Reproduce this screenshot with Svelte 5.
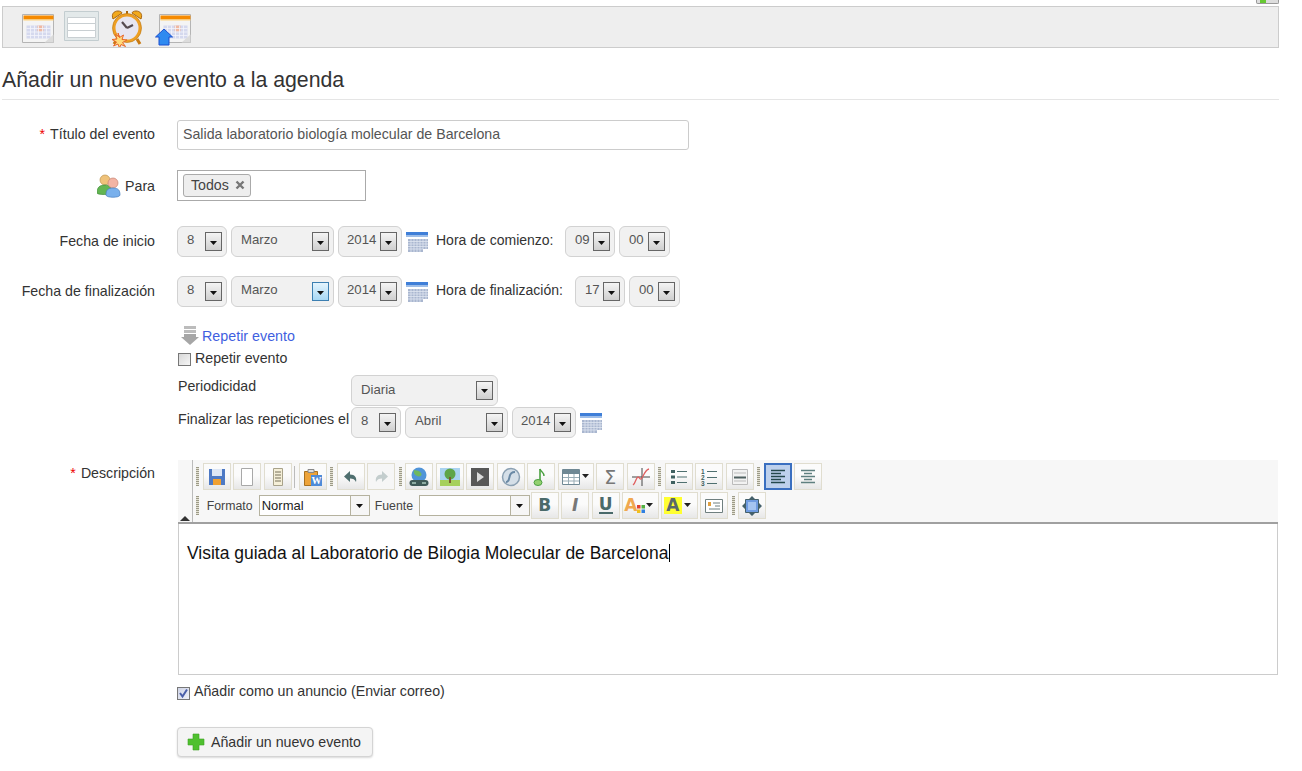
<script lang="ts">
</script>

{#snippet arrow(hot = false)}
  <span class="arrow" class:hot><svg width="7" height="4" viewBox="0 0 7 4"><path d="M0 0h7L3.500 4z" fill="#111" /></svg></span>
{/snippet}

{#snippet sel(text, size, hot = false)}
  <span class="sel {size}"><span class="sel-text">{text}</span>{@render arrow(hot)}</span>
{/snippet}

{#snippet calendar()}
  <svg class="cal" width="22" height="20" viewBox="0 0 22 20">
    <path d="M0 0h22v3H0z" fill="#3f7fd8" />
    <path d="M0 3h22v2H0z" fill="#9dbde8" />
    <path d="M2 7h20v10H17v3H2z" fill="#a9b6cf" />
    <path d="M2 9.500h20M2 12h20M2 14.500h20M2 17h15M5 7v13M8 7v13M11 7v13M14 7v13M17 7v10M20 7v10" stroke="#dfe6f1" stroke-width=".8" />
  </svg>
{/snippet}

{#snippet bigCal()}
  <path d="M0 0h31v28H0z" fill="#f4f4f4" stroke="#b4b4b4" />
  <path d="M1 1h30v4H1z" fill="#f58a00" />
  <path d="M1 5h30v1H1z" fill="#ffd27a" />
  <path d="M4 11h24v13H4z" fill="#d5d9ee" />
  <path d="M15 11h6v6h-6z" fill="#f0b9a2" />
  <path d="M4 14h24M4 17.500h24M4 21h24M8 11v13M12 11v13M16 11v13M20 11v13M24 11v13" stroke="#f4f5fb" stroke-width=".8" />
  <path d="M22 28l9-8v8z" fill="#dcdcdc" />
{/snippet}

<div class="page">
  <div class="corner"><span class="corner-icon"><i></i></span></div>

  <nav class="iconbar">
    <svg width="44" height="40" viewBox="0 0 44 40"><g transform="translate(2.500 7.500)">{@render bigCal()}</g></svg>
    <svg width="44" height="40" viewBox="0 0 44 40">
      <path d="M.5 4.500h34v29H.5z" fill="#e3e9ea" stroke="#c3cdd0" />
      <path d="M3.500 10.500h28v6h-28zM3.500 16.500h28v7h-28zM3.500 23.500h28v7h-28z" fill="#fff" stroke="#c9cfd2" />
    </svg>
    <svg width="44" height="40" viewBox="0 0 44 40">
      <path d="M5 12c-2-5 1-8 5-8 2 0 4 1 4 2zM33 12c2-5-1-8-5-8-2 0-4 1-4 2z" fill="#f2a91c" stroke="#a8650f" />
      <path d="M19 4v4" stroke="#a8650f" stroke-width="2" />
      <path d="M9 32l-3 5M29 32l3 5" stroke="#c97a12" stroke-width="3" />
      <circle cx="19" cy="21" r="13" fill="#e7e5f0" stroke="#ee9f24" stroke-width="3" />
      <circle cx="19" cy="21" r="14.500" fill="none" stroke="#b9730f" stroke-width=".6" />
      <path d="M19 21l-5-6M19 21l6-3" stroke="#554a50" stroke-width="2.200" />
      <path d="M10 26l1.500 4.500 4-2.500-1.500 4.500 5 .5-4.500 2.500 3 4-4.500-2-1.500 3.500-1.500-4-4.500 2 3-4-4.500-2.500 5-.5-1.500-4.500 4 2.500z" fill="#ffdb7a" stroke="#e8662a" />
    </svg>
    <svg width="44" height="40" viewBox="0 0 44 40">
      <g transform="translate(7.500 7.500)">{@render bigCal()}</g>
      <path d="M12 22l8.500 8H17v8H7v-8H3.500z" fill="#2f8af0" stroke="#1b4fd0" />
    </svg>
  </nav>

  <h1>Añadir un nuevo evento a la agenda</h1>

  <form class="form">
    <div class="row title-row">
      <label class="label" for="titulo"><em>*</em>Título del evento</label>
      <input id="titulo" class="text-input" value="Salida laboratorio biología molecular de Barcelona" />
    </div>

    <div class="row para-row">
      <span class="label para-label">
        <svg class="people" width="24" height="24" viewBox="0 0 24 24">
          <circle cx="8" cy="6" r="5" fill="#efc27a" stroke="#bd9350" stroke-width=".7" />
          <path d="M0 19c0-6 3-8 8-8s7 3 7 8c0 2-15 2-15 0z" fill="#62b552" stroke="#3f8c36" stroke-width=".7" />
          <circle cx="16" cy="9" r="5" fill="#f3b4a4" stroke="#c78473" stroke-width=".7" />
          <path d="M9 21c0-5 2-7 7-7s7 2 7 7c0 3-14 3-14 0z" fill="#79b0ec" stroke="#4b7fc0" stroke-width=".7" />
        </svg>
        Para
      </span>
      <div class="tag-box">
        <span class="tag">Todos
          <svg width="10" height="10" viewBox="0 0 10 10"><path d="M1.500 1.500l7 7M8.500 1.500l-7 7" stroke="#777" stroke-width="2.400" /></svg>
        </span>
      </div>
    </div>

    <div class="row date-row first">
      <span class="label">Fecha de inicio</span>
      <div class="controls">
        {@render sel('8', 'day')}
        {@render sel('Marzo', 'month')}
        {@render sel('2014', 'year')}
        {@render calendar()}
        <span class="time-label start">Hora de comienzo:</span>
        {@render sel('09', 'day')}
        {@render sel('00', 'minute')}
      </div>
    </div>

    <div class="row date-row">
      <span class="label">Fecha de finalización</span>
      <div class="controls">
        {@render sel('8', 'day')}
        {@render sel('Marzo', 'month', true)}
        {@render sel('2014', 'year')}
        {@render calendar()}
        <span class="time-label end">Hora de finalización:</span>
        {@render sel('17', 'day')}
        {@render sel('00', 'minute')}
      </div>
    </div>

    <div class="repeat">
      <div class="repeat-link">
        <svg width="18" height="20" viewBox="0 0 18 20">
          <path d="M3 0h12v3H3zM3 4h12v3H3z" fill="#bcbcbc" />
          <path d="M3 8h12v3h3l-9 8-9-8h3z" fill="#a6a6a6" />
        </svg>
        <span class="link">Repetir evento</span>
      </div>
      <label class="check"><input type="checkbox" /> Repetir evento</label>
      <div class="repeat-row period">
        <span class="repeat-label">Periodicidad</span>
        {@render sel('Diaria', 'wide')}
      </div>
      <div class="repeat-row until">
        <span class="repeat-label">Finalizar las repeticiones el</span>
        <div class="controls">
          {@render sel('8', 'day')}
          {@render sel('Abril', 'month')}
          {@render sel('2014', 'year')}
          {@render calendar()}
        </div>
      </div>
    </div>

    <div class="row desc-row">
      <span class="label desc-label"><em>*</em>Descripción</span>
      <div class="desc-main">
        <div class="editor">
          <div class="editor-head">
            <div class="collapse"><svg width="10" height="5" viewBox="0 0 10 5"><path d="M0 5L5 0l5 5z" fill="#333" /></svg></div>
            <div class="bars">
              <div class="bar">
                <i class="grip"></i>
                <span class="tb"><svg width="18" height="18" viewBox="0 0 18 18"><path d="M1 1h16v16H1z" fill="#4d79c4" /><path d="M4 1h10v7H4z" fill="#dce6f5" /><path d="M5 11h8v6H5z" fill="#f0a030" /></svg></span>
                <span class="tb"><svg width="18" height="20" viewBox="0 0 18 20"><path d="M3.500 1.500h11v17h-11z" fill="#fff" stroke="#a8a8a8" /></svg></span>
                <span class="tb"><svg width="18" height="20" viewBox="0 0 18 20"><path d="M4.500 1.500h9v17h-9z" fill="#f5efd8" stroke="#a8a28a" /><path d="M6 5h6M6 8h6M6 11h6M6 14h6" stroke="#77705a" /></svg></span>
                <i class="sep"></i>
                <span class="tb"><svg width="20" height="20" viewBox="0 0 20 20"><path d="M1.500 4.500h13v14h-13z" fill="#eda33a" stroke="#a8701f" /><path d="M5 2.500h6v3H5z" fill="#ddd" stroke="#888" /><path d="M8 8h11v11H8z" fill="#4f8bd8" /><text x="13.500" y="17" class="w-mark">W</text></svg></span>
                <i class="grip"></i>
                <span class="tb"><svg width="18" height="18" viewBox="0 0 18 18"><path d="M8 3L2 8.500 8 14v-3.500c3 0 5 1 6 3.500 1-4-1-7.500-6-7.500z" fill="#4f6f6f" /></svg></span>
                <span class="tb off"><svg width="18" height="18" viewBox="0 0 18 18"><path d="M10 3l6 5.500L10 14v-3.500c-3 0-5 1-6 3.500-1-4 1-7.500 6-7.500z" fill="#c3cdcd" /></svg></span>
                <i class="grip"></i>
                <span class="tb"><svg width="20" height="20" viewBox="0 0 20 20"><circle cx="10" cy="8" r="7.500" fill="#4f94d8" /><path d="M5 3c3 1 5 0 7 3s-2 4-4 3-4-3-3-6z" fill="#6fb85f" /><path d="M3.500 13h13a2.500 2.500 0 0 1 0 6h-13a2.500 2.500 0 0 1 0-6z" fill="#3f5a58" /><path d="M3 16h4M13 16h4" stroke="#dfe" /></svg></span>
                <span class="tb"><svg width="20" height="18" viewBox="0 0 20 18"><path d="M0 0h20v18H0z" fill="#a9d3f0" /><path d="M0 12h20v6H0z" fill="#a6d05c" /><circle cx="10" cy="6" r="5.500" fill="#5fa548" /><path d="M9 9h2v6H9z" fill="#7a5a30" /></svg></span>
                <span class="tb"><svg width="20" height="20" viewBox="0 0 20 20"><path d="M1 1h18v18H1z" fill="#585858" /><path d="M7 5l7 5-7 5z" fill="#dcdcdc" /></svg></span>
                <span class="tb"><svg width="20" height="20" viewBox="0 0 20 20"><circle cx="10" cy="10" r="8.500" fill="#d5dfe8" stroke="#8ba0b2" stroke-width="1.500" /><path d="M14 5c-4 0-5 2-5.500 5S7 15 5 15" fill="none" stroke="#6a89a5" stroke-width="2" /></svg></span>
                <span class="tb"><svg width="18" height="20" viewBox="0 0 18 20"><path d="M8 2v13" stroke="#4aa040" stroke-width="1.600" /><path d="M8 2c1 3 4 3 4 7" fill="none" stroke="#4aa040" stroke-width="1.400" /><ellipse cx="6" cy="15.500" rx="4" ry="3" fill="#93d070" stroke="#4aa040" /></svg></span>
                <span class="tb wide"><svg width="18" height="16" viewBox="0 0 18 16"><path d="M.5.500h17v15H.5z" fill="#fff" stroke="#6f8894" /><path d="M1 1h16v4H1z" fill="#6f8894" /><path d="M1 8.500h16M1 12h16M6.500 5v10M12 5v10" stroke="#9aadb6" /></svg><svg class="caret" width="7" height="4" viewBox="0 0 7 4"><path d="M0 0h7L3.500 4z" fill="#222" /></svg></span>
                <span class="tb"><span class="sigma">Σ</span></span>
                <span class="tb"><svg width="20" height="20" viewBox="0 0 20 20"><path d="M1 10h18M11 1v18" stroke="#444" /><path d="M2 18c3-2 3-8 5-8s2 4 4 1 3-8 7-9" fill="none" stroke="#e06060" stroke-width="1.300" /></svg></span>
                <i class="grip"></i>
                <span class="tb"><svg width="18" height="16" viewBox="0 0 18 16"><path d="M1 1h4v3H1zM1 6.500h4v3H1zM1 12h4v3H1z" fill="#3f6060" /><path d="M7 2.500h10M7 8h10M7 13.500h10" stroke="#4f7070" /></svg></span>
                <span class="tb"><svg width="18" height="18" viewBox="0 0 18 18"><text x="1" y="6" class="num">1</text><text x="1" y="12" class="num">2</text><text x="1" y="18" class="num">3</text><path d="M7 3.500h10M7 9.500h10M7 15.500h10" stroke="#4f7070" /></svg></span>
                <span class="tb"><svg width="18" height="18" viewBox="0 0 18 18"><path d="M1.500 1.500h15v15h-15z" fill="#f2f2f2" stroke="#bbb" /><path d="M3 5h12M3 13h12" stroke="#bbb" /><path d="M3 8.500h12v2H3z" fill="#4f6060" /></svg></span>
                <i class="grip"></i>
                <span class="tb on"><svg width="18" height="16" viewBox="0 0 18 16"><path d="M2 1.500h14M2 4.500h10M2 7.500h14M2 10.500h10M2 13.500h14" stroke="#24484c" stroke-width="1.500" /></svg></span>
                <span class="tb"><svg width="18" height="16" viewBox="0 0 18 16"><path d="M2 1.500h14M5 4.500h8M2 7.500h14M5 10.500h8M2 13.500h14" stroke="#5f8080" stroke-width="1.500" /></svg></span>
              </div>
              <div class="bar">
                <i class="grip"></i>
                <span class="bar-label fmt">Formato</span>
                <span class="combo"><span class="combo-text">Normal</span><span class="combo-arrow"><svg width="7" height="4" viewBox="0 0 7 4"><path d="M0 0h7L3.500 4z" fill="#111" /></svg></span></span>
                <span class="bar-label font">Fuente</span>
                <span class="combo"><span class="combo-text"></span><span class="combo-arrow"><svg width="7" height="4" viewBox="0 0 7 4"><path d="M0 0h7L3.500 4z" fill="#111" /></svg></span></span>
                <span class="tb first-b"><b class="glyph">B</b></span>
                <span class="tb"><b class="glyph italic">I</b></span>
                <span class="tb"><b class="glyph under">U</b></span>
                <span class="tb wide2"><b class="glyph orange">A</b><svg class="dots" width="8" height="8" viewBox="0 0 8 8"><path d="M0 0h3.500v3.500H0z" fill="#e04030" /><path d="M4.500 0H8v3.500H4.500z" fill="#50b040" /><path d="M0 4.500h3.500V8H0z" fill="#f0c020" /><path d="M4.500 4.500H8V8H4.500z" fill="#3080e0" /></svg><svg class="caret" width="7" height="4" viewBox="0 0 7 4"><path d="M0 0h7L3.500 4z" fill="#222" /></svg></span>
                <span class="tb wide2"><b class="glyph hilite">A</b><svg class="caret" width="7" height="4" viewBox="0 0 7 4"><path d="M0 0h7L3.500 4z" fill="#222" /></svg></span>
                <span class="tb"><svg width="18" height="16" viewBox="0 0 18 16"><path d="M.5 1.500h17v13H.5z" fill="#fff" stroke="#6f7f7f" /><path d="M8 5h7M10 8h5M4 11h11" stroke="#6f7f7f" /><path d="M3 4h3v4H3z" fill="#e0a040" /></svg></span>
                <i class="grip"></i>
                <span class="tb"><svg width="20" height="20" viewBox="0 0 20 20"><path d="M10 0l3 3H7zM10 20l3-3H7zM0 10l3-3v6zM20 10l-3-3v6z" fill="#44606a" /><path d="M3.500 3.500h13v13h-13z" fill="#6f9be0" stroke="#44606a" /><path d="M6 6h8v8H6z" fill="#a5c4f0" /></svg></span>
              </div>
            </div>
          </div>
          <div class="editor-body">Visita guiada al Laboratorio de Bilogia Molecular de Barcelona<i class="cursor"></i></div>
        </div>
        <label class="check notice"><input type="checkbox" checked /> Añadir como un anuncio (Enviar correo)</label>
        <button type="button" class="add">
          <svg width="18" height="18" viewBox="0 0 18 18"><path d="M6 1h6v5h5v6h-5v5H6v-5H1V6h5z" fill="#4fc02f" stroke="#3ca322" stroke-width=".6" /></svg>
          Añadir un nuevo evento
        </button>
      </div>
    </div>
  </form>
</div>

<style>
  :global(body) { background: #fff; }
  .page { width: 1302px; height: 771px; overflow: hidden; font-family: "Liberation Sans", Arial, sans-serif; font-size: 14.2px; color: #333; }
  .corner { display: flex; justify-content: flex-end; height: 6px; padding-right: 23px; }
  .corner-icon { display: block; width: 23px; height: 4px; box-sizing: border-box; border: 1px solid #999; border-top: 0; border-radius: 0 0 2px 2px; background: #ddd; }
  .corner-icon i { display: block; width: 6px; height: 3px; margin-left: 3px; background: #66c832; }

  .iconbar { display: flex; box-sizing: border-box; width: 1277px; height: 42px; margin-left: 2px; padding-left: 17px; border: 1px solid #ccc; background: #eee; }
  .iconbar svg { display: block; flex: none; }

  h1 { box-sizing: border-box; width: 1277px; height: 52px; margin: 0 0 0 2px; padding-top: 20px; border-bottom: 1px solid #e5e5e5; font-size: 21.3px; line-height: 24px; font-weight: 400; color: #333; }

  .row { display: flex; align-items: center; }
  .label { display: flex; align-items: center; justify-content: flex-end; flex: none; width: 155px; margin-right: 22px; padding-bottom: 2px; }
  .label em { font-style: normal; color: #e00; margin-right: 5px; }
  .para-label { padding-bottom: 0; }
  .title-row { margin-top: 20px; height: 30px; }
  .text-input { box-sizing: border-box; width: 512px; height: 30px; padding: 0 5px 2px; border: 1px solid #ccc; border-radius: 3px; font: inherit; color: #555; outline: none; }

  .para-row { margin-top: 20px; height: 31px; }
  .people { margin-right: 4px; }
  .tag-box { box-sizing: border-box; width: 189px; height: 31px; padding: 3px 5px; border: 1px solid #aaa; }
  .tag { display: inline-flex; align-items: center; gap: 6px; box-sizing: border-box; width: 68px; height: 23px; padding: 0 0 1px 7px; border: 1px solid #aaa; border-radius: 3px; background: #eee; color: #444; }

  .date-row { margin-top: 19px; height: 31px; }
  .date-row.first { margin-top: 25px; }
  .controls { display: flex; align-items: center; gap: 4px; }
  .sel { display: flex; align-items: center; justify-content: space-between; flex: none; box-sizing: border-box; height: 31px; padding: 0 4px 0 9px; border: 1px solid #d2d2d2; border-radius: 6px; background: #f1f1f1; color: #555; font-size: 13.2px; }
  .day { width: 50px; }
  .minute { width: 51px; }
  .month { width: 103px; }
  .year { width: 64px; padding-left: 8px; }
  .wide { width: 147px; }
  .sel-text { position: relative; top: -2px; }
  .wide .sel-text { top: -1px; }
  .arrow { display: flex; align-items: center; justify-content: center; box-sizing: border-box; width: 17px; height: 19px; padding-top: 2px; border: 1px solid #666; background: linear-gradient(#f4f4f4, #cfcfcf); }
  .arrow.hot { border-color: #3c7fb1; background: linear-gradient(#e4f4fd, #a7d8f5); }
  .cal { flex: none; }
  .time-label { white-space: nowrap; margin-left: 4px; padding-bottom: 3px; font-size: 14px; }
  .time-label.start { width: 125px; }
  .time-label.end { width: 135px; }

  .repeat { margin: 19px 0 0 178px; }
  .repeat-link { display: flex; align-items: center; gap: 3px; height: 20px; margin-left: 3px; }
  .link { color: #3f5fe0; font-size: 14.3px; }
  .check { display: flex; align-items: center; gap: 4px; margin: 3px 0 0; }
  .check input { appearance: none; flex: none; box-sizing: border-box; width: 13px; height: 13px; margin: 4px 0 0; border: 1px solid #777; background: linear-gradient(135deg, #d8d8d8, #f6f6f6); }
  .check input:checked { background: url("data:image/svg+xml,%3Csvg xmlns='http://www.w3.org/2000/svg' width='11' height='11'%3E%3Cpath d='M2 5l2.500 3.500L9 1.500' fill='none' stroke='%234a5ea8' stroke-width='2'/%3E%3C/svg%3E") center no-repeat, linear-gradient(135deg, #cfd4e6, #eef0f8); }
  .repeat-row { display: flex; align-items: center; }
  .repeat-label { flex: none; width: 173px; white-space: nowrap; position: relative; top: -4px; }
  .period { height: 30px; margin-top: 9px; }
  .until { height: 31px; margin-top: 2px; }

  .desc-row { align-items: flex-start; margin-top: 22px; }
  .desc-label { margin-top: 5px; margin-right: 23px; }
  .desc-main { width: 1100px; }

  .editor { box-sizing: border-box; width: 1100px; height: 215px; border: 1px solid #ccc; border-top: 0; }
  .editor-head { display: flex; height: 62px; margin: 0 -1px; border-bottom: 2px solid #a0a0a0; background: #f7f7f7; }
  .collapse { display: flex; align-items: flex-end; box-sizing: border-box; flex: none; width: 15px; padding: 0 0 1px 2px; border-right: 1px solid #bbb; }
  .collapse svg { display: block; }
  .bars { padding: 3px 0 0 2.200px; }
  .bar { display: flex; align-items: center; height: 27px; margin-bottom: 2px; }
  .grip { flex: none; display: block; width: 3px; height: 19px; margin: 0 3.500px 0 1px; background: repeating-linear-gradient(#9c9a88 0 1px, #e4e2d4 1px 2px); }
  .sep { flex: none; width: 1px; height: 22px; margin: 0 3.500px 0 0; background: #bbb; }
  .tb { display: flex; align-items: center; justify-content: center; flex: none; box-sizing: border-box; width: 28px; height: 27px; margin-right: 2.500px; border: 1px solid #e0ddcf; background: linear-gradient(#fbfbfb 45%, #e7e7e7); }
  .tb svg { display: block; }
  .tb.off { background: #f6f6f6; }
  .tb.on { border: 2px solid #3a6fc0; background: #bdd0ec; }
  .tb.wide { width: 36px; gap: 2px; }
  .tb.wide2 { width: 36.500px; gap: 2px; position: relative; padding-right: 4px; }
  .caret { position: relative; top: -1px; }
  .dots { position: absolute; left: 14px; bottom: 5px; }
  .first-b { margin-left: 1px; }
  .sigma { font-size: 19px; color: #777; font-family: "DejaVu Sans", sans-serif; }
  .w-mark { font-size: 10px; font-weight: 700; fill: #fff; text-anchor: middle; font-family: "Liberation Serif", serif; }
  .num { font-size: 6.500px; fill: #3f6060; font-weight: 700; }
  .glyph { font-size: 17px; line-height: 1; color: #4a6a6a; font-family: "DejaVu Sans", sans-serif; }
  .glyph.italic { font-style: italic; color: #777; }
  .glyph.under { border-bottom: 2px solid #4a6a6a; line-height: 15px; }
  .glyph.orange { color: #f0a850; margin-right: 6px; }
  .glyph.hilite { background: #ffff30; color: #5a6a6a; padding: 0 2px; }
  .bar-label { flex: none; font-size: 12.300px; color: #444; }
  .bar-label.fmt { width: 52px; margin-left: 4px; }
  .bar-label.font { width: 44px; margin-left: 5px; }
  .combo { display: flex; flex: none; box-sizing: border-box; width: 111px; height: 21px; border: 1px solid #b5b29f; background: #fff; }
  .combo-text { flex: 1; padding-left: 2px; font-size: 13px; line-height: 19px; color: #222; }
  .combo-arrow { display: flex; align-items: center; justify-content: center; width: 18px; border-left: 1px solid #b5b29f; background: #f6f6f6; }

  .editor-body { padding: 19px 8px 0; font-size: 17.480px; line-height: 20px; color: #111; }
  .cursor { display: inline-block; width: 1px; height: 18px; margin-left: 1px; vertical-align: -3px; background: #000; }

  .notice { margin: 7px 0 0 -1px; height: 18px; }
  .add { display: flex; align-items: center; gap: 6px; box-sizing: border-box; width: 196px; height: 30px; margin: 27px 0 0 -1px; padding: 0 0 0 9px; border: 1px solid #d4d4d4; border-radius: 4px; background: #f4f4f4; box-shadow: 0 1px 2px rgba(0, 0, 0, .15); font: inherit; color: #333; }
</style>
